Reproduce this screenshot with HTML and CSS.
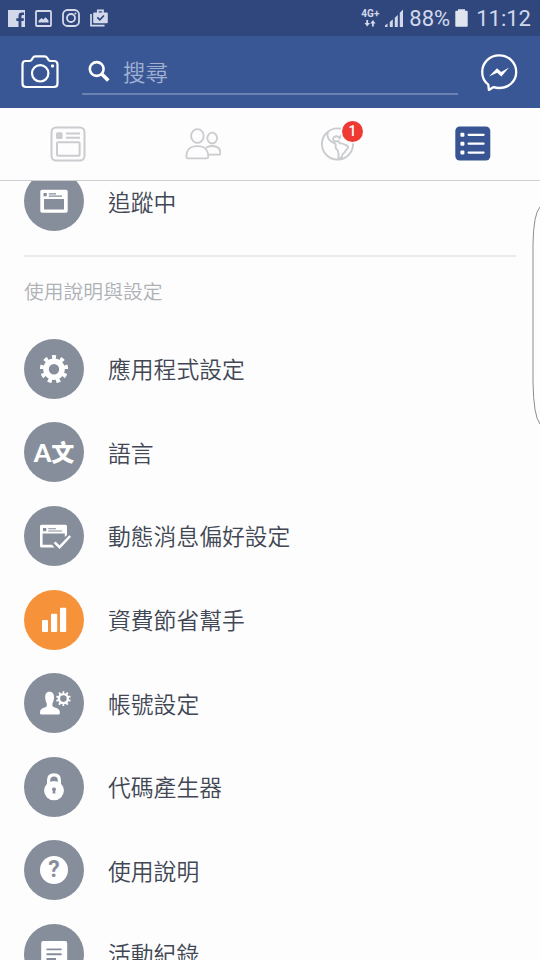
FILE: index.html
```html
<!DOCTYPE html>
<html lang="zh-Hant">

<head>
    <meta charset="UTF-8">
    <meta name="viewport" content="width=device-width, initial-scale=1.0">
    <title>使用說明與設定</title>
    <link rel="stylesheet" href="styles.css">
</head>

<body>
    <!-- Status bar -->
    <div class="status-bar">
        <div class="status-left">
            <svg width="17" height="17" viewBox="0 0 17 17">
                <path fill="#d3d9ea" d="M0 0H17V17H13.4V10.9H15.6L16 8.2H13.4V6.4Q13.4 5 14.8 5H16V2.6H14Q10.5 2.6 10.5 6V8.2H8.3V10.9H10.5V17H0Z" />
            </svg>
            <svg width="17" height="17" viewBox="0 0 17 17">
                <rect x="1" y="1" width="15" height="15" rx="1" fill="none" stroke="#d3d9ea" stroke-width="1.8" />
                <path fill="#d3d9ea" d="M3.5 12.5V10.8L6.5 8L8.2 9.6L10.6 7.2L13.5 10.6V12.5Z" />
            </svg>
            <svg width="18" height="18" viewBox="0 0 18 18" fill="none" stroke="#d3d9ea" stroke-width="1.8">
                <rect x="1" y="1" width="16" height="16" rx="4.5" />
                <circle cx="9" cy="9" r="4" />
                <circle cx="13.4" cy="4.6" r="1" fill="#d3d9ea" stroke="none" />
            </svg>
            <svg width="18" height="18" viewBox="0 0 18 18">
                <path fill="none" stroke="#d3d9ea" stroke-width="1.7" d="M1 5V16.6H14.5M7.8 4V1.4H13V4" />
                <rect x="3.2" y="3.4" width="14.6" height="10.9" rx="1" fill="#d3d9ea" />
                <path fill="none" stroke="#30477d" stroke-width="1.7" d="M7.3 8.4L9.8 10.9L14 6.5" />
            </svg>
        </div>
        <div class="status-right">
            <div class="network">
                <span>4G+</span>
                <svg width="12" height="7" viewBox="0 0 12 7" fill="#d3d9ea">
                    <path d="M2.3 0H4.1V3H6L3.2 6.4L.5 3H2.3ZM8 6.4H9.8V3.4H11.6L8.9 0L6.2 3.4H8Z" />
                </svg>
            </div>
            <svg class="signal" width="19" height="18" viewBox="0 0 19 18" fill="#d3d9ea">
                <path d="M0 18V16.5L2.5 14.6V18ZM4.8 18V13L7.8 10.3V18ZM9.8 18V8.8L12.8 6V18ZM14.8 18V3.8L18 .6V18Z" />
            </svg>
            <span class="percent">88%</span>
            <svg class="battery" width="13" height="18" viewBox="0 0 13 18" fill="#dfe4ef">
                <path d="M3 .3H10V1.8H12Q12.7 1.8 12.7 2.8V17Q12.7 17.8 12 17.8H1Q.3 17.8 .3 17V2.8Q.3 1.8 1 1.8H3Z" />
            </svg>
            <span class="time">11:12</span>
        </div>
    </div>

    <!-- Search header -->
    <header class="header">
        <svg class="camera" width="38" height="34" viewBox="0 0 38 34" fill="none" stroke="#fff" stroke-width="2.2">
            <path stroke-linejoin="round" d="M4.5 6H8.5Q10.2 6 11 4.3L11.7 3Q12.6 1.4 14.5 1.4H23.5Q25.4 1.4 26.3 3L27 4.3Q27.8 6 29.5 6H33Q36.5 6 36.5 9.5V28.5Q36.5 32 33 32H5Q1.5 32 1.5 28.5V9.5Q1.5 6 4.5 6Z" />
            <circle cx="19.2" cy="18.3" r="8.2" />
            <rect x="30" y="9.4" width="3" height="3" rx=".8" fill="#fff" stroke="none" />
        </svg>
        <div class="search">
            <svg width="22" height="22" viewBox="0 0 22 22" fill="none" stroke="#fff">
                <circle cx="8.7" cy="9" r="6.9" stroke-width="2.6" />
                <path stroke-width="3.6" d="M13.5 13.8L20.3 20.6" />
            </svg>
            <span>搜尋</span>
        </div>
        <svg class="messenger" width="38" height="38" viewBox="0 0 38 38">
            <path fill="none" stroke="#fff" stroke-width="2.3" stroke-linejoin="round" d="M8.3 31.6C4.3 28.6 2.2 23.8 2.2 19C2.2 9.6 9.8 2.4 19.2 2.4S36.2 9.6 36.2 19S28.6 35 19.2 35C17.2 35 15.2 34.7 13.6 34.1L8.9 37Z" />
            <path fill="#fff" d="M9 23.6L17 15.2L21.2 18.9L29 14.6L21.4 23.4L17.1 19.7Z" />
        </svg>
    </header>

    <!-- Tabs -->
    <nav class="tabs">
        <div class="tab">
            <svg width="36" height="36" viewBox="0 0 36 36" fill="none" stroke="#cbcccf" stroke-width="2">
                <rect x="1.5" y="1.5" width="33" height="33" rx="4.5" />
                <rect x="6" y="6.3" width="6.6" height="6.6" rx="1.5" fill="#cbcccf" stroke="none" />
                <path d="M16 7.5H30M16 11.8H30" />
                <rect x="7" y="16.3" width="22.6" height="13.4" rx="1" />
            </svg>
        </div>
        <div class="tab">
            <svg width="36" height="36" viewBox="0 0 36 36" fill="none" stroke="#cbcccf" stroke-width="1.8">
                <ellipse cx="12.4" cy="10.1" rx="6.3" ry="6.9" />
                <ellipse cx="27.2" cy="12.1" rx="4.9" ry="5.4" />
                <path d="M1.4 31Q1.2 20.2 12.3 20.2T23.2 31Q23.2 32.4 21.6 32.4H3Q1.4 32.4 1.4 31Z" />
                <path d="M20.8 21.8Q23.4 20 27 20Q35.4 20 35.4 27.3Q35.4 28.7 34 28.7H23.2" />
            </svg>
        </div>
        <div class="tab">
            <svg width="36" height="36" viewBox="0 0 36 36" fill="none" stroke="#cbcccf" stroke-width="1.9" stroke-linejoin="round">
                <circle cx="17.5" cy="18" r="15.6" />
                <path d="M8 6Q6.8 9 8 11.5Q9.5 15.5 14.5 17.2Q16.3 18 15.6 20.5Q15.2 22.3 17.4 24Q18.8 25.3 18.4 33.4Q21.8 32.6 22.2 29.4Q22.3 27.8 24.8 26.2Q26 23.5 28 22Q28.4 19.6 25.4 19Q22.8 17.2 20 17.4L18.2 15.2L14.6 15.4Q12 13.4 13.8 11.2Q16.4 9.6 18.6 10.8L19.6 12.6Q20 9.6 22.6 8.4" />
            </svg>
            <span class="badge">1</span>
        </div>
        <div class="tab">
            <svg width="36" height="36" viewBox="0 0 36 36">
                <rect x=".3" y=".5" width="35" height="34" rx="4.5" fill="#385492" />
                <g fill="#fff">
                    <rect x="5.4" y="6.8" width="4" height="4" rx="1" />
                    <rect x="5.4" y="15.7" width="4" height="4" rx="1" />
                    <rect x="5.4" y="24.6" width="4" height="4" rx="1" />
                </g>
                <path stroke="#fff" stroke-width="2.2" stroke-linecap="round" d="M13.6 8.8H28.6M13.6 17.7H28.6M13.6 26.6H28.6" />
            </svg>
        </div>
    </nav>

    <!-- Menu -->
    <main class="menu">
        <div class="item item-cut">
            <svg class="icon" viewBox="0 0 60 60">
                <rect x="16.3" y="18.7" width="27.4" height="23" rx="1.8" fill="#fff" />
                <path fill="#868e9b" d="M19.5 22H22.8V25.3H19.5ZM24.8 22.2H32V23.4H24.8ZM24.8 24.5H38V25.7H24.8ZM20 28H40V38.4H20Z" />
            </svg>
            <span>追蹤中</span>
        </div>
        <hr>
        <h2>使用說明與設定</h2>
        <div class="item">
            <svg class="icon" viewBox="0 0 60 60" fill="none" stroke="#fff">
                <circle cx="30" cy="30.2" r="8" stroke-width="5.6" />
                <circle cx="30" cy="30.2" r="11.9" stroke-width="4.4" pathLength="18" stroke-dasharray=".95 1.05" stroke-dashoffset=".475" transform="rotate(-90 30 30.2)" />
            </svg>
            <span>應用程式設定</span>
        </div>
        <div class="item">
            <div class="icon language"><b>A</b><b class="wen">文</b></div>
            <span>語言</span>
        </div>
        <div class="item">
            <svg class="icon" viewBox="0 0 60 60">
                <path fill="#fff" d="M16 20.3Q16 18.8 17.5 18.8H41.5Q43 18.8 43 20.3V29L40.8 31V27.5H18.6V38.8H28L30.5 41.4H17.5Q16 41.4 16 39.9Z" />
                <path fill="#868e9b" d="M19 22H22.3V25.3H19ZM24.3 22.2H32V23.3H24.3ZM24.3 24.5H38V25.6H24.3Z" />
                <path fill="none" stroke="#fff" stroke-width="2.5" d="M30.6 36.4L35.6 41.2L46.2 30" />
            </svg>
            <span>動態消息偏好設定</span>
        </div>
        <div class="item">
            <svg class="icon orange" viewBox="0 0 60 60" fill="#fff">
                <rect x="18" y="30" width="6" height="12" rx="1" />
                <rect x="27" y="23.8" width="6.2" height="18.2" rx="1" />
                <rect x="36" y="17.7" width="6.2" height="24.3" rx="1" />
            </svg>
            <span>資費節省幫手</span>
        </div>
        <div class="item">
            <svg class="icon" viewBox="0 0 60 60">
                <path fill="#fff" d="M25.5 18.8C29 18.8 30.2 21.2 30 24.6C29.9 27 29.4 29 28.4 30.6V32.4Q28.6 33.6 30 34.2Q35.6 35.6 35.8 38.8V40.6Q35.8 41.4 35 41.4H17Q16 41.4 16 40.6V38.8Q16.2 35.6 21.4 34.2Q22.8 33.6 22.8 32.4V30.6C21.9 29 21.3 27 21.2 24.6C21 21.2 22.2 18.8 25.5 18.8Z" />
                <g fill="none" stroke="#fff">
                    <circle cx="39.4" cy="25.6" r="4.5" stroke-width="2.4" />
                    <circle cx="39.4" cy="25.6" r="6.2" stroke-width="2.4" pathLength="20" stroke-dasharray=".9 1.1" stroke-dashoffset=".45" transform="rotate(-90 39.4 25.6)" />
                </g>
            </svg>
            <span>帳號設定</span>
        </div>
        <div class="item">
            <svg class="icon" viewBox="0 0 60 60">
                <path fill="none" stroke="#fff" stroke-width="3.2" d="M24.6 28V23.4Q24.6 17.9 30 17.9T35.4 23.4V28" />
                <ellipse cx="30" cy="33.6" rx="9.9" ry="9.7" fill="#fff" />
                <path fill="#868e9b" d="M30 30.4A2 2 0 0 1 31.2 34L31.4 36.4H28.6L28.8 34A2 2 0 0 1 30 30.4Z" />
            </svg>
            <span>代碼產生器</span>
        </div>
        <div class="item">
            <div class="icon help"><b>?</b></div>
            <span>使用說明</span>
        </div>
        <div class="item">
            <svg class="icon" viewBox="0 0 60 60">
                <rect x="17.2" y="17" width="26" height="28" rx="2" fill="#fff" />
                <path stroke="#868e9b" stroke-width="1.9" d="M22.5 25.4H37.6M22.5 30.2H37.6M22.5 35H32" />
            </svg>
            <span>活動紀錄</span>
        </div>
    </main>

    <!-- Edge panel handle -->
    <svg class="edge" width="10" height="224" viewBox="0 0 10 224" fill="none" stroke="#8d8d8d" stroke-width="1">
        <path d="M10 3Q3.5 10 3 40V178Q3.5 212 10 220" />
    </svg>
</body>

</html>
```
FILE: styles.css
```css
* {
    box-sizing: border-box;
}

body {
    position: relative;
    display: flex;
    flex-direction: column;
    width: 540px;
    height: 960px;
    margin: 0;
    overflow: hidden;
    background-color: #fdfdfd;
    font-family: "Noto Sans CJK TC", sans-serif;
}

svg {
    display: block;
    flex-shrink: 0;
}

.status-bar {
    display: flex;
    justify-content: space-between;
    height: 36px;
    padding: 0 9px 0 8px;
    background-color: #30477d;
    color: #d3d9ea;
    font-family: Roboto, sans-serif;
}

.status-left,
.status-right {
    display: flex;
    align-items: center;
}

.status-left {
    gap: 10px;
}

.network {
    display: flex;
    flex-direction: column;
    align-items: center;
    gap: 2px;
    width: 20px;
    margin-right: 5px;
    font-size: 10px;
    font-weight: 700;
    line-height: 9px;
}

.percent,
.time {
    font-size: 22px;
    line-height: 36px;
    padding-top: 1px;
}

.percent {
    margin: 0 5px 0 5px;
}

.time {
    margin-left: 8px;
}

.header {
    display: flex;
    align-items: center;
    height: 72px;
    padding: 0 22px 0 21px;
    background-color: #3a5795;
}

.search {
    display: flex;
    align-items: center;
    flex: 1;
    gap: 13px;
    height: 46px;
    margin: 0 22px 0 23px;
    padding-left: 6px;
    border-bottom: 2px solid #6b82b3;
    color: #a0b0d2;
    font-size: 22.5px;
    font-weight: 350;
}

.tabs {
    display: flex;
    height: 73px;
    border-bottom: 1px solid #cfd0d3;
}

.tab {
    position: relative;
    display: flex;
    flex: 1;
    align-items: center;
    justify-content: center;
}

.badge {
    position: absolute;
    top: 13px;
    left: 72px;
    width: 21px;
    height: 21px;
    border-radius: 50%;
    background-color: #ee3a33;
    box-shadow: 0 0 0 1.5px #fdfdfd;
    color: #ffffff;
    font-family: Roboto, sans-serif;
    font-size: 14px;
    font-weight: 500;
    line-height: 21px;
    text-align: center;
}

.menu {
    flex: 1;
    min-height: 0;
    padding: 0 24px;
    overflow: hidden;
}

.item {
    display: flex;
    align-items: center;
    gap: 24px;
    height: 83.6px;
    color: #414754;
    font-size: 22.8px;
    font-weight: 350;
    line-height: 34px;
}

.item > span {
    padding-top: 1px;
}

.item-cut {
    height: 60px;
    margin-top: -10px;
}

.icon {
    flex-shrink: 0;
    width: 60px;
    height: 60px;
    border-radius: 50%;
    background-color: #868e9b;
}

.orange {
    background-color: #f6923a;
}

.language {
    display: flex;
    align-items: center;
    justify-content: center;
    color: #ffffff;
    font-size: 25px;
    line-height: 60px;
}

.language b {
    font-family: Lato, sans-serif;
    font-weight: 900;
}

.language .wen {
    padding-bottom: 3px;
    font-family: "Noto Sans CJK TC", sans-serif;
    font-size: 23px;
}

.help {
    display: flex;
    align-items: center;
    justify-content: center;
}

.help b {
    width: 28px;
    height: 28px;
    border-radius: 50%;
    background-color: #ffffff;
    color: #868e9b;
    font-family: Roboto, sans-serif;
    font-size: 23px;
    font-weight: 700;
    line-height: 28px;
    text-align: center;
}

hr {
    height: 2px;
    margin: 24px 0 0;
    border: none;
    background-color: #e9eaeb;
}

h2 {
    margin: 19px 0 21px;
    color: #aeb1b6;
    font-size: 19.8px;
    font-weight: 350;
    line-height: 30px;
}

/* sits over the list at the right side of the screen */
.edge {
    position: absolute;
    top: 204px;
    right: 0;
}
```
